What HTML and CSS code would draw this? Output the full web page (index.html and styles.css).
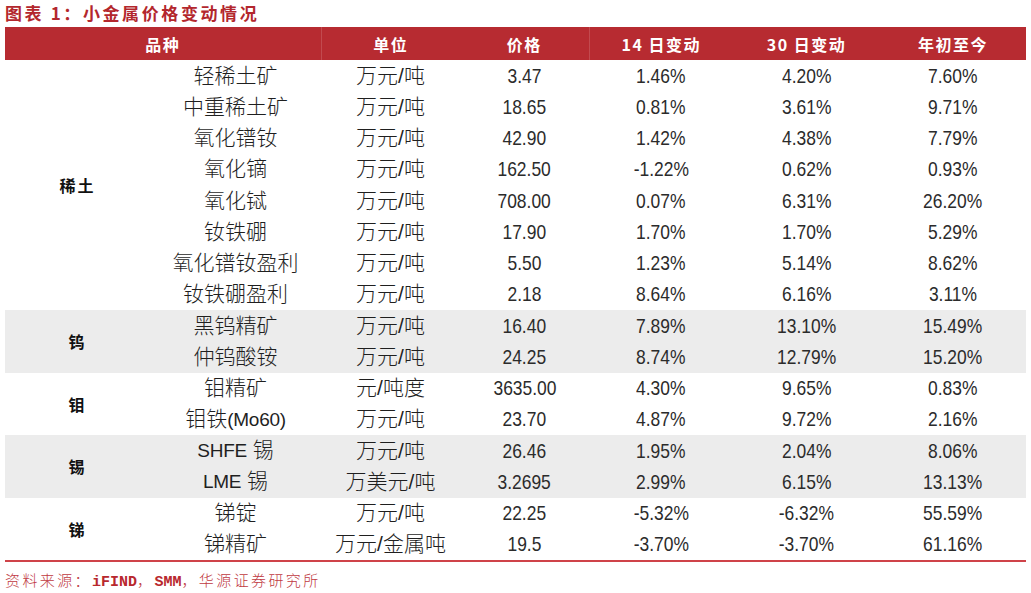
FILE: index.html
```html
<!DOCTYPE html>
<html lang="zh">
<head>
<meta charset="utf-8">
<title>小金属价格变动情况</title>
<link rel="stylesheet" href="styles.css">
</head>
<body>
<div class="page">
  <h1 class="title">图表 1：小金属价格变动情况</h1>
  <table class="tbl">
    <colgroup>
      <col class="c-cat"><col class="c-prod"><col class="c-unit"><col class="c-price"><col class="c-d14"><col class="c-d30"><col class="c-ytd">
    </colgroup>
    <thead>
      <tr>
        <th colspan="2" class="sep">品种</th>
        <th>单位</th>
        <th class="sep">价格</th>
        <th>14 日变动</th>
        <th>30 日变动</th>
        <th>年初至今</th>
      </tr>
    </thead>
    <tbody>
      <tr><td rowspan="8" class="cat">稀土</td><td>轻稀土矿</td><td>万元/吨</td><td><span class="n">3.47</span></td><td><span class="n">1.46%</span></td><td><span class="n">4.20%</span></td><td><span class="n">7.60%</span></td></tr>
      <tr><td>中重稀土矿</td><td>万元/吨</td><td><span class="n">18.65</span></td><td><span class="n">0.81%</span></td><td><span class="n">3.61%</span></td><td><span class="n">9.71%</span></td></tr>
      <tr><td>氧化镨钕</td><td>万元/吨</td><td><span class="n">42.90</span></td><td><span class="n">1.42%</span></td><td><span class="n">4.38%</span></td><td><span class="n">7.79%</span></td></tr>
      <tr><td>氧化镝</td><td>万元/吨</td><td><span class="n">162.50</span></td><td><span class="n">-1.22%</span></td><td><span class="n">0.62%</span></td><td><span class="n">0.93%</span></td></tr>
      <tr><td>氧化铽</td><td>万元/吨</td><td><span class="n">708.00</span></td><td><span class="n">0.07%</span></td><td><span class="n">6.31%</span></td><td><span class="n">26.20%</span></td></tr>
      <tr><td>钕铁硼</td><td>万元/吨</td><td><span class="n">17.90</span></td><td><span class="n">1.70%</span></td><td><span class="n">1.70%</span></td><td><span class="n">5.29%</span></td></tr>
      <tr><td>氧化镨钕盈利</td><td>万元/吨</td><td><span class="n">5.50</span></td><td><span class="n">1.23%</span></td><td><span class="n">5.14%</span></td><td><span class="n">8.62%</span></td></tr>
      <tr><td>钕铁硼盈利</td><td>万元/吨</td><td><span class="n">2.18</span></td><td><span class="n">8.64%</span></td><td><span class="n">6.16%</span></td><td><span class="n">3.11%</span></td></tr>
      <tr class="alt"><td rowspan="2" class="cat">钨</td><td>黑钨精矿</td><td>万元/吨</td><td><span class="n">16.40</span></td><td><span class="n">7.89%</span></td><td><span class="n">13.10%</span></td><td><span class="n">15.49%</span></td></tr>
      <tr class="alt"><td>仲钨酸铵</td><td>万元/吨</td><td><span class="n">24.25</span></td><td><span class="n">8.74%</span></td><td><span class="n">12.79%</span></td><td><span class="n">15.20%</span></td></tr>
      <tr><td rowspan="2" class="cat">钼</td><td>钼精矿</td><td>元/吨度</td><td><span class="n">3635.00</span></td><td><span class="n">4.30%</span></td><td><span class="n">9.65%</span></td><td><span class="n">0.83%</span></td></tr>
      <tr><td>钼铁<span class="lat">(Mo60)</span></td><td>万元/吨</td><td><span class="n">23.70</span></td><td><span class="n">4.87%</span></td><td><span class="n">9.72%</span></td><td><span class="n">2.16%</span></td></tr>
      <tr class="alt"><td rowspan="2" class="cat">锡</td><td><span class="lat">SHFE</span> 锡</td><td>万元/吨</td><td><span class="n">26.46</span></td><td><span class="n">1.95%</span></td><td><span class="n">2.04%</span></td><td><span class="n">8.06%</span></td></tr>
      <tr class="alt"><td><span class="lat">LME</span> 锡</td><td>万美元/吨</td><td><span class="n">3.2695</span></td><td><span class="n">2.99%</span></td><td><span class="n">6.15%</span></td><td><span class="n">13.13%</span></td></tr>
      <tr><td rowspan="2" class="cat">锑</td><td>锑锭</td><td>万元/吨</td><td><span class="n">22.25</span></td><td><span class="n">-5.32%</span></td><td><span class="n">-6.32%</span></td><td><span class="n">55.59%</span></td></tr>
      <tr><td>锑精矿</td><td>万元/金属吨</td><td><span class="n">19.5</span></td><td><span class="n">-3.70%</span></td><td><span class="n">-3.70%</span></td><td><span class="n">61.16%</span></td></tr>
    </tbody>
  </table>
  <p class="source">资料来源：<span class="src-latin">iFIND</span>，<span class="src-latin">SMM</span>，华源证券研究所</p>
</div>
</body>
</html>
```

FILE: styles.css
```css
html, body {
  margin: 0;
  padding: 0;
  background: #ffffff;
}

.page {
  padding: 0 5px;
  width: 1021px;
}

.title {
  margin: 0;
  height: 27px;
  padding-top: 1px;
  box-sizing: border-box;
  font-family: "Noto Sans CJK SC", sans-serif;
  font-weight: 700;
  font-size: 17px;
  line-height: 23px;
  letter-spacing: 2.6px;
  color: #b3272d;
}

.tbl {
  width: 1021px;
  border-collapse: collapse;
  table-layout: fixed;
  font-family: "Liberation Sans", "Noto Sans CJK SC", sans-serif;
  font-weight: 300;
  font-size: 21px;
  color: #1f1f1f;
  border-bottom: 2px solid #cf4349;
}

.c-cat { width: 145px; }
.c-prod { width: 171px; }
.c-unit { width: 139px; }
.c-price { width: 129px; }
.c-d14 { width: 144px; }
.c-d30 { width: 147px; }
.c-ytd { width: 146px; }

.tbl th {
  height: 33px;
  padding: 0;
  background: #b72b31;
  color: #ffffff;
  font-family: "Noto Sans CJK SC", sans-serif;
  font-weight: 700;
  font-size: 16px;
  letter-spacing: 1.5px;
  text-align: center;
  vertical-align: middle;
}

.tbl th.sep {
  border-right: 1px solid #c24a4f;
}

.tbl td {
  height: 31.25px;
  padding: 0;
  text-align: center;
  vertical-align: middle;
  line-height: 24px;
  white-space: nowrap;
}

.n {
  display: inline-block;
  transform: scaleX(0.83);
  font-weight: 400;
  color: #2b2b2b;
}

.lat {
  font-size: 19px;
  font-weight: 400;
  letter-spacing: -0.3px;
}

.tbl td.cat {
  font-family: "Noto Sans CJK SC", sans-serif;
  font-weight: 700;
  font-size: 16px;
  letter-spacing: 2px;
  color: #111111;
}

.tbl tr.alt td {
  background: #ececec;
}

.source {
  margin: 8px 0 0 0;
  font-family: "Noto Sans CJK SC", sans-serif;
  font-weight: 300;
  font-size: 15px;
  line-height: 20px;
  letter-spacing: 2.4px;
  color: #c0393f;
}

.src-latin {
  font-family: "Liberation Mono", monospace;
  font-weight: 700;
  letter-spacing: 0;
  color: #b8282e;
}
```
